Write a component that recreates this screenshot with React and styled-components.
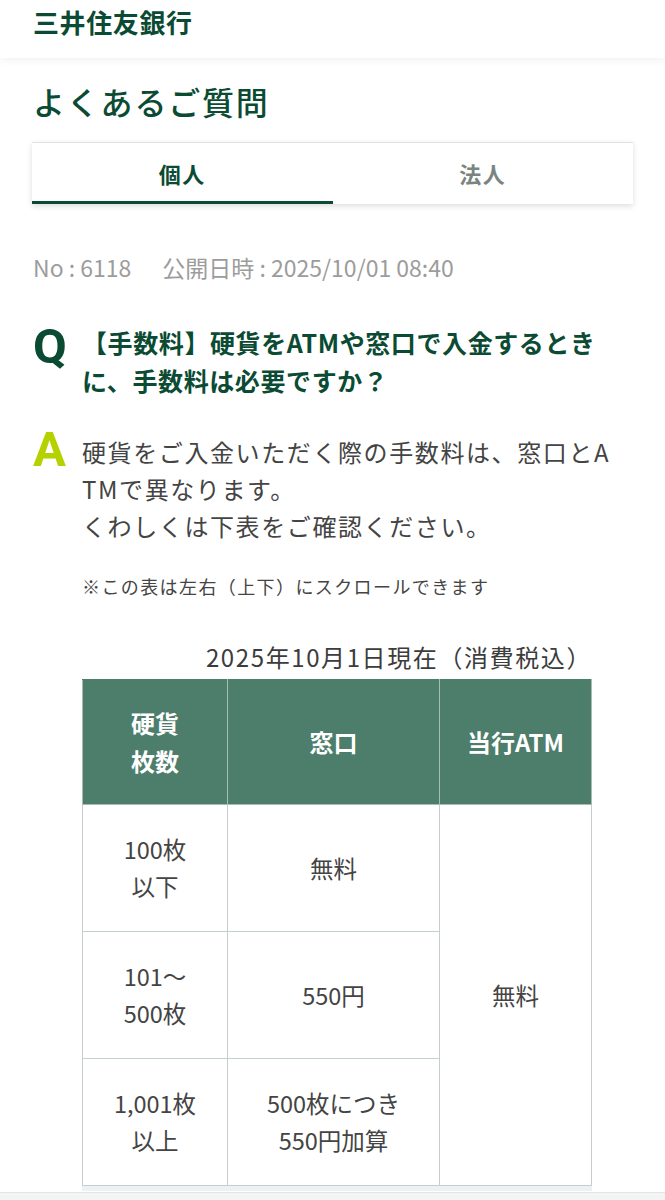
import styled, { createGlobalStyle } from "styled-components";

const GlobalStyle = createGlobalStyle`
  html, body {
    margin: 0;
    padding: 0;
    background: #ffffff;
  }
  body {
    font-family: "Noto Sans CJK JP", "Noto Sans", sans-serif;
    color: #444444;
  }
  * {
    box-sizing: border-box;
  }
`;

const GREEN = "#0b4b33";

const rows = [
  { count: ["100枚", "以下"], window: ["無料"] },
  { count: ["101～", "500枚"], window: ["550円"] },
  { count: ["1,001枚", "以上"], window: ["500枚につき", "550円加算"] },
];

export default function App() {
  return (
    <>
      <GlobalStyle />
      <Page>
        <SiteHeader>
          <Logo>三井住友銀行</Logo>
        </SiteHeader>
        <Main>
          <Title>よくあるご質問</Title>
          <Tabs>
            <Tab active>個人</Tab>
            <Tab>法人</Tab>
          </Tabs>
          <Meta>
            <span>No : 6118</span>
            <span>公開日時 : 2025/10/01 08:40</span>
          </Meta>
          <QaRow>
            <Mark kind="q">Q</Mark>
            <Question>【手数料】硬貨をATMや窓口で入金するときに、手数料は必要ですか？</Question>
          </QaRow>
          <QaRow answer>
            <Mark kind="a">A</Mark>
            <AnswerBody>
              <Paragraph>硬貨をご入金いただく際の手数料は、窓口とATMで異なります。</Paragraph>
              <Paragraph>くわしくは下表をご確認ください。</Paragraph>
              <Note>※この表は左右（上下）にスクロールできます</Note>
              <Caption>2025年10月1日現在（消費税込）</Caption>
              <TableScroll>
                <FeeTable>
                  <thead>
                    <tr>
                      <Th width={145}>
                        硬貨
                        <br />
                        枚数
                      </Th>
                      <Th width={212}>窓口</Th>
                      <Th>当行ATM</Th>
                    </tr>
                  </thead>
                  <tbody>
                    {rows.map((row, i) => (
                      <tr key={i}>
                        <Td>
                          {row.count.map((line, j) => (
                            <div key={j}>{line}</div>
                          ))}
                        </Td>
                        <Td>
                          {row.window.map((line, j) => (
                            <div key={j}>{line}</div>
                          ))}
                        </Td>
                        {i === 0 && <Td rowSpan={3}>無料</Td>}
                      </tr>
                    ))}
                  </tbody>
                </FeeTable>
              </TableScroll>
            </AnswerBody>
          </QaRow>
        </Main>
        <BottomBand />
      </Page>
    </>
  );
}

const Page = styled.div`
  width: 665px;
  height: 1200px;
  overflow: hidden;
  display: flex;
  flex-direction: column;
`;

const SiteHeader = styled.header`
  height: 58px;
  padding: 3px 33px 0;
  background: #ffffff;
  box-shadow: 0 3px 8px rgba(0, 0, 0, 0.05);
  position: relative;
  z-index: 1;
`;

const Logo = styled.div`
  font-size: 26px;
  line-height: 38px;
  font-weight: 700;
  letter-spacing: 0.6px;
  color: ${GREEN};
`;

const Main = styled.main`
  flex: 1;
  padding: 21px 32px 0 33px;
`;

const Title = styled.h1`
  margin: 0;
  font-size: 32px;
  line-height: 44px;
  font-weight: 500;
  letter-spacing: 1.8px;
  color: ${GREEN};
`;

const Tabs = styled.div`
  margin: 19px 0 0 -1px;
  height: 62px;
  display: grid;
  grid-template-columns: 1fr 1fr;
  background: #ffffff;
  border-top: 1px solid #e2e2e2;
  box-shadow: 0 2px 6px rgba(0, 0, 0, 0.14);
`;

const Tab = styled.div`
  display: flex;
  align-items: center;
  justify-content: center;
  font-size: 22px;
  font-weight: 700;
  letter-spacing: 1.5px;
  color: ${({ active }) => (active ? GREEN : "#7a8580")};
  border-bottom: 3px solid ${({ active }) => (active ? GREEN : "transparent")};
  padding-top: 1px;
`;

const Meta = styled.div`
  margin-top: 47px;
  display: flex;
  gap: 31px;
  font-size: 23px;
  line-height: 32px;
  color: #9c9c9c;
`;

const QaRow = styled.div`
  display: flex;
  margin-top: ${({ answer }) => (answer ? "34px" : "40px")};
`;

const Mark = styled.div`
  flex: 0 0 49px;
  font-family: "Roboto", "Liberation Sans", sans-serif;
  font-weight: 700;
  font-size: 49px;
  line-height: 1;
  margin-top: ${({ kind }) => (kind === "q" ? "-1px" : "-8px")};
  color: ${({ kind }) => (kind === "q" ? GREEN : "#b6d100")};
`;

const Question = styled.h2`
  margin: 0;
  width: 530px;
  font-size: 25px;
  line-height: 38px;
  font-weight: 700;
  letter-spacing: 0.6px;
  color: ${GREEN};
  word-break: break-all;
`;

const AnswerBody = styled.div`
  flex: 1;
`;

const Paragraph = styled.p`
  margin: 0;
  width: 536px;
  font-size: 24px;
  line-height: 37px;
  letter-spacing: 1.6px;
  color: #444444;
  word-break: break-all;
`;

const Note = styled.p`
  margin: 28px 0 0;
  font-size: 18px;
  line-height: 28px;
  letter-spacing: 1.4px;
  color: #444444;
`;

const Caption = styled.div`
  margin: 39px 0 4px;
  width: 510px;
  text-align: right;
  font-size: 24px;
  line-height: 36px;
  letter-spacing: 1.6px;
  color: #3c3c3c;
`;

const TableScroll = styled.div`
  width: 510px;
  border-bottom: 5px solid #eef1f1;
`;

const FeeTable = styled.table`
  width: 510px;
  border-collapse: collapse;
  table-layout: fixed;
`;

const Th = styled.th`
  width: ${({ width }) => (width ? `${width}px` : "auto")};
  height: 125px;
  background: #4d7d6b;
  color: #ffffff;
  font-size: 24px;
  line-height: 38px;
  font-weight: 700;
  text-align: center;
  border: 1px solid #a7bdb4;
  border-top-color: #4d7d6b;
  padding: 0;
`;

const Td = styled.td`
  height: 127px;
  padding: 0;
  text-align: center;
  vertical-align: middle;
  font-size: 23.5px;
  line-height: 37px;
  color: #444444;
  border: 1px solid #c6cfcf;
`;

const BottomBand = styled.div`
  height: 8px;
  flex: 0 0 8px;
  background: #f3f4f4;
  border-top: 1px solid #e4e6e6;
`;
